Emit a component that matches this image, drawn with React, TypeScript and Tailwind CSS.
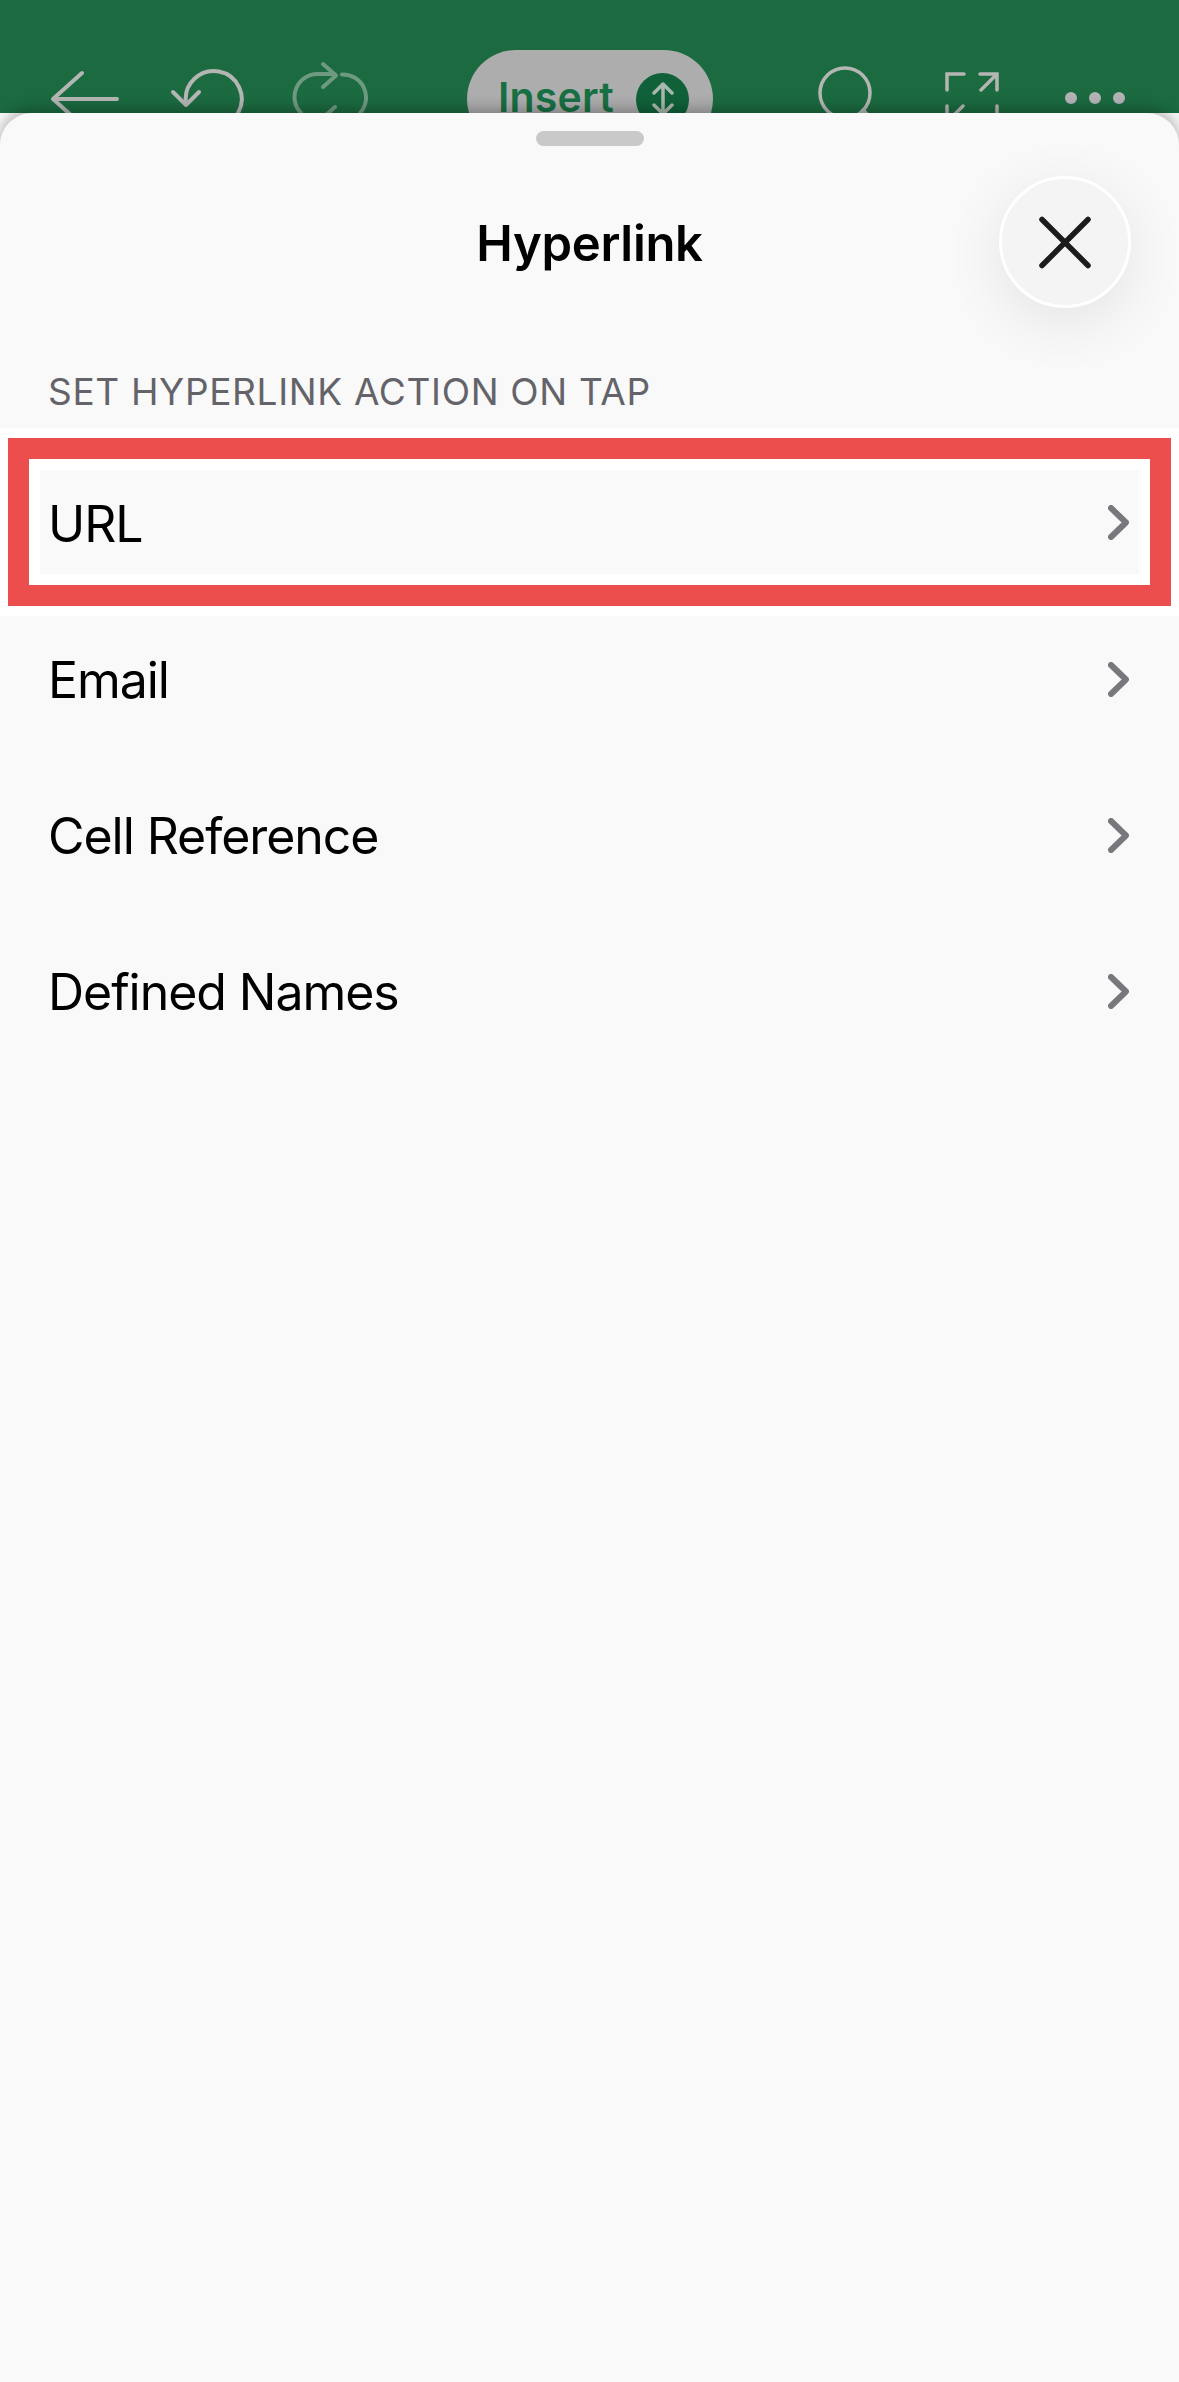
export default function App() {
  const Chevron = () => (
    <svg width="21" height="35" viewBox="0 0 21 35" fill="none" stroke="#78787c" strokeWidth="6" strokeLinecap="round" strokeLinejoin="round" className="shrink-0">
      <path d="M3 3 L18 17.5 L3 32" />
    </svg>
  );
  const rows = ["Email", "Cell Reference", "Defined Names"];
  const font = { fontFamily: "Inter, 'Noto Sans', sans-serif" };
  return (
    <div className="w-[1179px] h-[2382px] flex flex-col bg-[#f9f9f9] overflow-hidden" style={font}>
      <div className="h-[113px] shrink-0 bg-[#1b6a40] overflow-hidden flex items-start pt-[50px] pl-[40px]">
        <svg width="340" height="63" viewBox="40 50 340 63" fill="none" strokeLinecap="round" strokeLinejoin="round" className="shrink-0">
          <g stroke="#b3b6b3" strokeWidth="4">
            <path d="M82 73 L53 99 L82 125 M53 99 H117" />
            <path d="M186 103 A28 28 0 1 1 238 113" />
            <path d="M173 92 L186 105 L199 92" />
          </g>
          <g stroke="#6f9a82" strokeWidth="4">
            <path d="M334 74 H318 A23 23 0 0 0 301 113" />
            <path d="M323 64 L336 75.500 L323 87" />
            <path d="M342 74.500 A23 23 0 0 1 360 113" />
            <path d="M335 107 L326 115" />
          </g>
        </svg>
        <div className="ml-[87px] w-[246px] h-[98px] shrink-0 rounded-[49px] bg-[#adadad] flex items-center pl-[31px]">
          <span className="-mt-[4px] text-[41px] leading-[94px] font-semibold tracking-[0.2px] text-[#177043] w-[138px]">Insert</span>
          <span className="w-[53px] h-[53px] rounded-full bg-[#10613a] flex items-center justify-center">
            <svg width="28" height="36" viewBox="0 0 28 36" fill="none" stroke="#a9b8ae" strokeWidth="3.500" strokeLinecap="round" strokeLinejoin="round">
              <path d="M14 3 V33 M5 12 L14 3 L23 12 M5 24 L14 33 L23 24" />
            </svg>
          </span>
        </div>
        <svg width="320" height="63" viewBox="810 50 320 63" fill="none" stroke="#b3b6b3" strokeWidth="3.500" strokeLinecap="round" className="ml-[97px] shrink-0">
          <circle cx="845" cy="93" r="25" />
          <path d="M863 111 L880 128" strokeWidth="5" />
          <path d="M947 90 V74 H964 M980 74 H997 V90 M997 74 L981 90 M947 106 V122 M963 106 L947 122 M997 106 V122" />
          <g fill="#b3b3b6" stroke="none">
            <circle cx="1071" cy="98" r="6" />
            <circle cx="1095" cy="98" r="6" />
            <circle cx="1119" cy="98" r="6" />
          </g>
        </svg>
      </div>
      <div className="relative flex-1 flex flex-col rounded-t-[32px] bg-[#f9f9f9] shadow-[0_-4px_14px_rgba(0,0,0,0.28)]">
        <div className="mt-[18px] mx-auto w-[108px] h-[15px] rounded-full bg-[#c9c9c9]" />
        <div className="mt-[30px] px-[48px] grid grid-cols-[132px_1fr_132px] items-center">
          <div />
          <h1 className="mt-[3px] text-center text-[49px] font-semibold leading-[60px] tracking-[-0.3px] text-black">Hyperlink</h1>
          <button className="w-[132px] h-[132px] rounded-full bg-[#f4f4f4] border-[3px] border-white flex items-center justify-center shadow-[0_14px_60px_rgba(0,0,0,0.09)]">
            <svg width="54" height="54" viewBox="0 0 54 54" fill="none" stroke="#1c1c1c" strokeWidth="5.500" strokeLinecap="round">
              <path d="M4 4.500 L50 50.500 M50 4.500 L4 50.500" />
            </svg>
          </button>
        </div>
        <div className="mt-[61px] mb-[13px] pl-[48px] text-[37px] leading-[46px] tracking-[0.67px] text-[#636369]">SET HYPERLINK ACTION ON TAP</div>
        <div className="bg-white px-[8px] py-[10px]">
          <div className="border-[21px] border-[#ec4e4e] bg-white p-[11px]">
            <div className="h-[104px] bg-[#f9f9f9] flex items-center justify-between pl-[8px] pr-[10px]">
              <span className="mt-[3px] text-[50px] leading-[60px] tracking-[-1.05px] text-black">URL</span>
              <Chevron />
            </div>
          </div>
        </div>
        <div className="flex flex-col gap-[30px]">
          {rows.map((r) => (
            <div key={r} className="h-[126px] flex items-center justify-between pl-[48px] pr-[50px]">
              <span className="mt-[2px] text-[50px] leading-[60px] tracking-[-1.05px] text-black">{r}</span>
              <Chevron />
            </div>
          ))}
        </div>
      </div>
    </div>
  );
}
